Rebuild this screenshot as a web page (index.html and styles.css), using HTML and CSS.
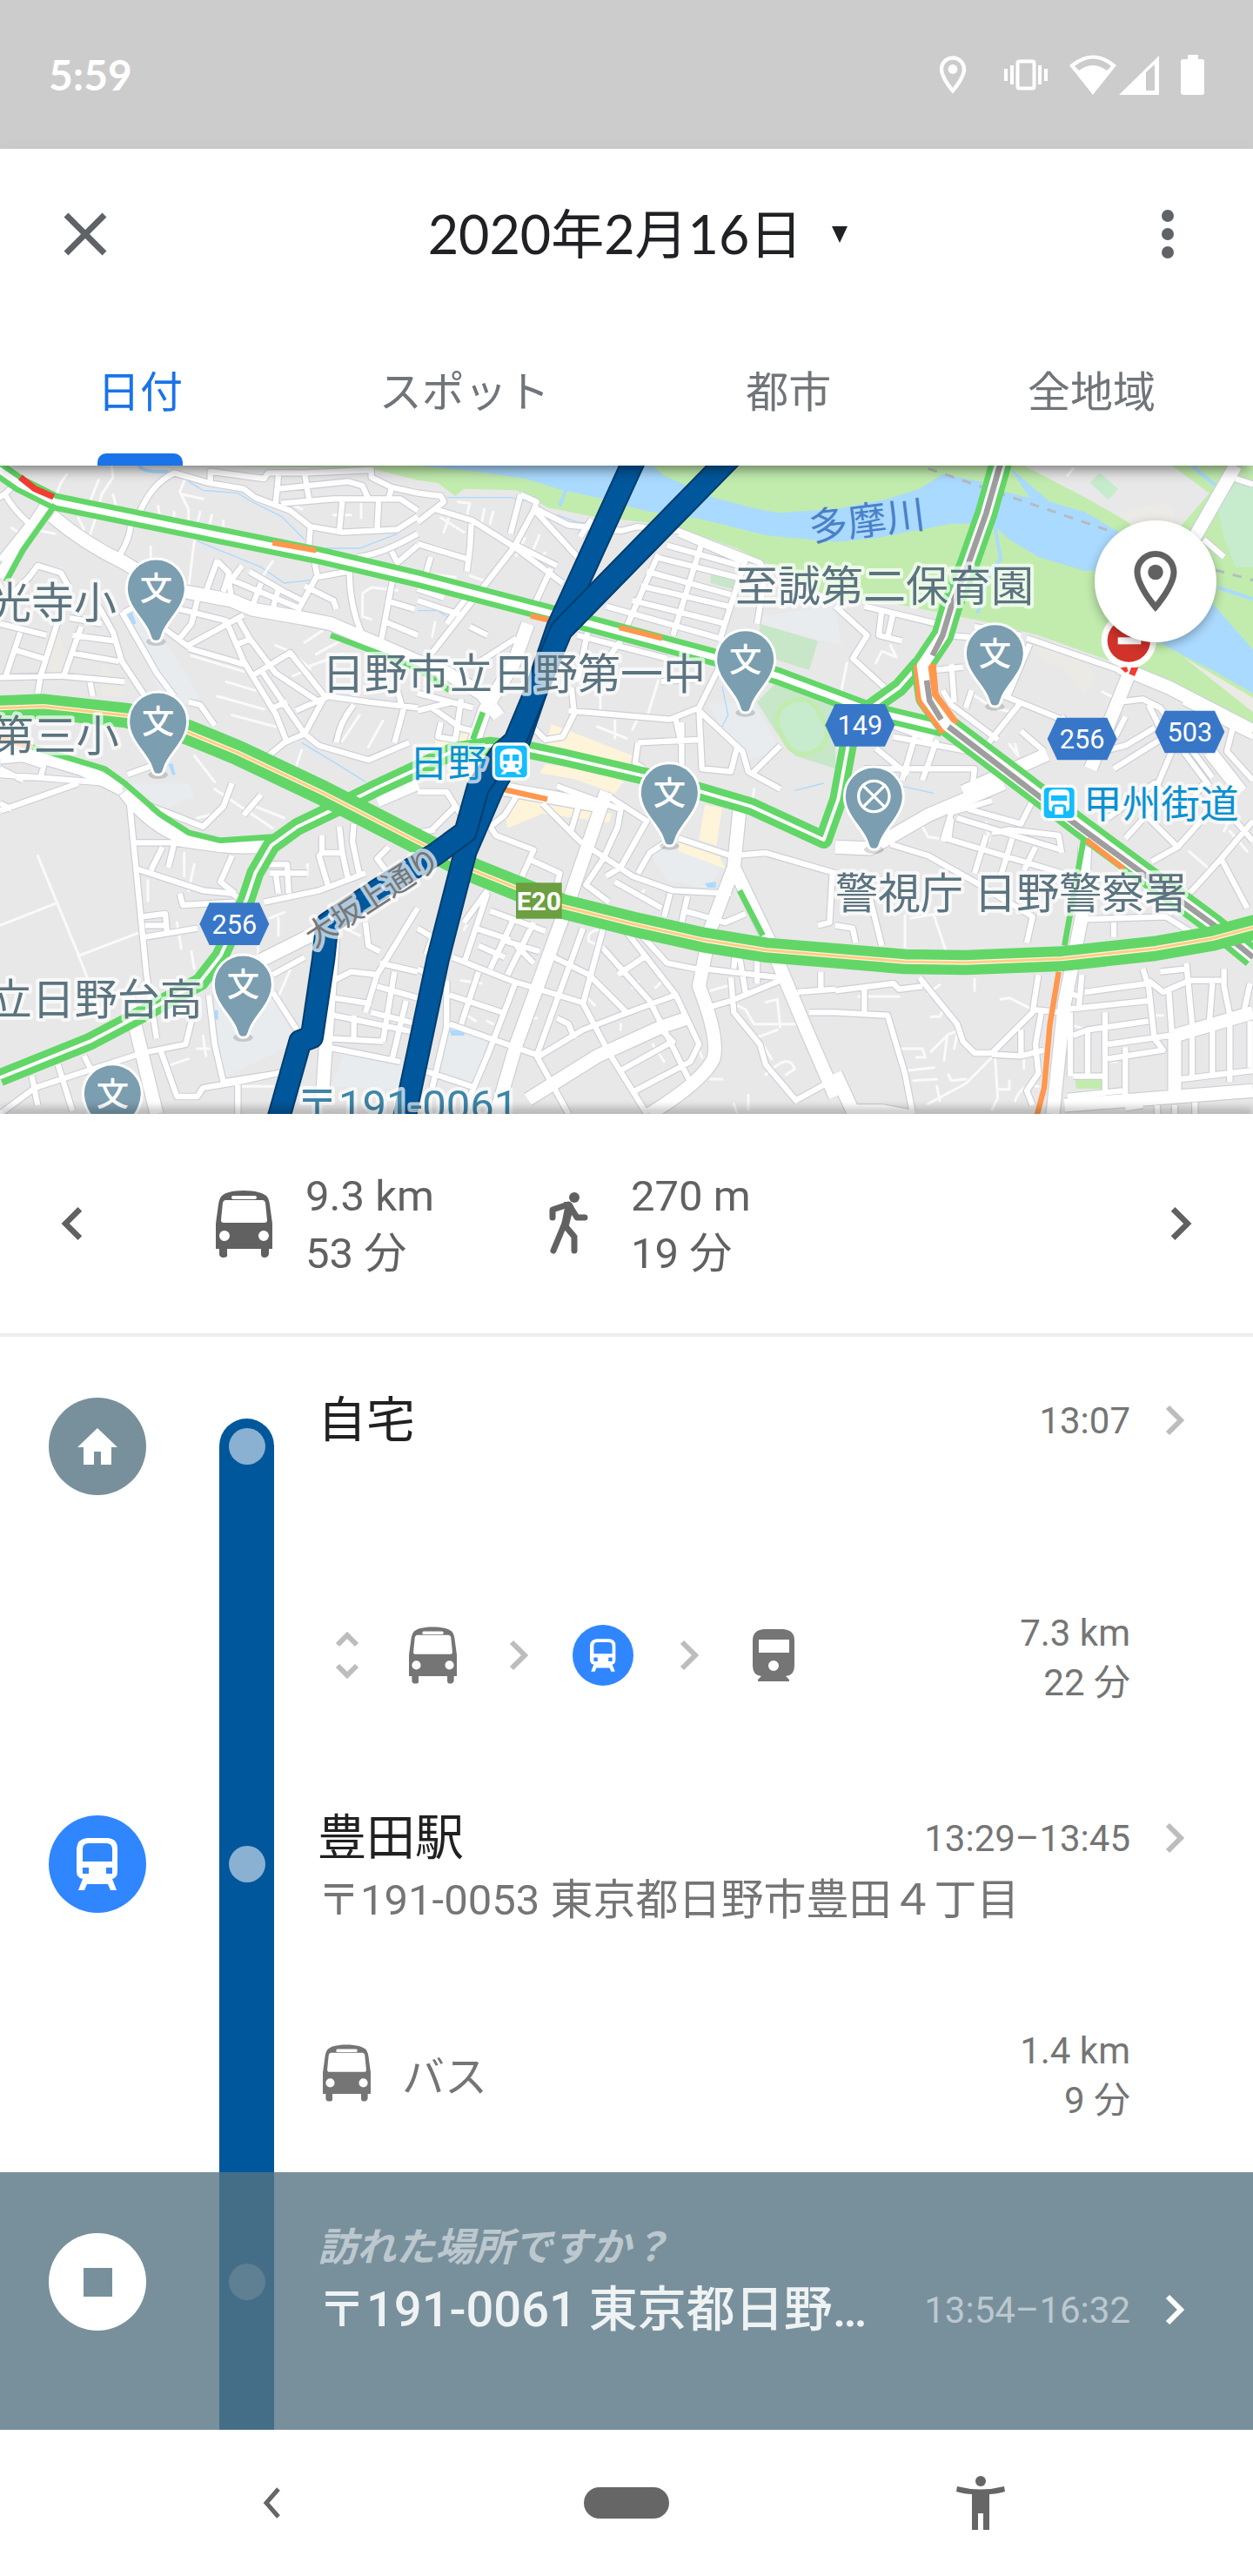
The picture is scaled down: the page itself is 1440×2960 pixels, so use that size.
FILE: index.html
```html
<!DOCTYPE html>
<html lang="ja">
<head>
	<meta charset="utf-8">
	<meta name="viewport" content="width=device-width, initial-scale=1">
	<title>タイムライン</title>
	<link rel="stylesheet" href="styles.css">
</head>
<body>
	<!-- shared icons -->
	<svg class="defs" width="0" height="0" aria-hidden="true">
		<symbol id="bus" viewBox="0 0 65 77">
			<path fill-rule="evenodd" d="M32 0C18 0 10 3 7 6Q4 9 3 16L0 38V67H4V73Q4 77 9 77T13 73V67H52V73Q52 77 56 77T61 73V67H65V38L62 16Q61 9 58 6C54 3 46 0 32 0ZM20 6H45Q47 6 47 8T45 10H20Q18 10 18 8T20 6ZM11 11H54Q56 11 57 14L59 34Q59 37 56 37H9Q6 37 6 34L8 14Q9 11 11 11ZM10 46A6 6 0 1 1 10 58A6 6 0 1 1 10 46ZM55 46A6 6 0 1 1 55 58A6 6 0 1 1 55 46Z"/>
		</symbol>
		<symbol id="train" viewBox="0 0 48 60">
			<path fill-rule="evenodd" d="M12 0H36Q47 1 47 12V38Q47 46 41 47L46 60H39L36 53H12L9 60H2L7 47Q0 46 0 38V12Q1 1 12 0ZM14 6Q7 6 7 13V27H41V13Q41 6 34 6ZM7 34V41H14V34ZM34 34V41H41V34Z"/>
		</symbol>
		<symbol id="metro" viewBox="0 0 48 60">
			<path fill-rule="evenodd" d="M13 0H35Q48 1 48 13V42Q48 53 38 54L42 58V60H6V58L10 54Q0 53 0 42V13Q0 1 13 0ZM7 12V27H42V12ZM24 36A6 6 0 1 0 24 48A6 6 0 1 0 24 36Z"/>
		</symbol>
		<symbol id="pin" viewBox="0 0 24 24">
			<path d="M12 2C8.13 2 5 5.13 5 9c0 5.25 7 13 7 13s7-7.75 7-13c0-3.87-3.13-7-7-7zM7 9c0-2.76 2.24-5 5-5s5 2.24 5 5c0 2.88-2.88 7.19-5 9.88C9.92 16.21 7 11.85 7 9z"/>
			<circle cx="12" cy="9" r="2.5"/>
		</symbol>
		<symbol id="chevron" viewBox="0 0 22 36">
			<path d="M3 3L18 18L3 33" fill="none" stroke="currentColor" stroke-width="6"/>
		</symbol>
	</svg>

	<header class="status">
		<span class="clock">5:59</span>
		<div class="status-icons">
			<svg class="st-pin" width="52" height="52"><use href="#pin"/></svg>
			<svg class="st-vibrate" width="50" height="46" viewBox="0 0 50 46">
				<rect x="15.500" y="7.500" width="19" height="31" rx="2" fill="none" stroke="#fff" stroke-width="4"/>
				<path d="M7 12h4v22H7zM0 16h4v14H0zM39 12h4v22h-4zM46 16h4v14h-4z"/>
			</svg>
			<svg class="st-wifi" width="54" height="46" viewBox="0 0 54 46">
				<path fill-rule="evenodd" d="M27 46L0 12Q27 -11 54 12ZM6 13L11 18Q27 6 43 18L48 13Q27 -4 6 13Z"/>
			</svg>
			<svg class="st-signal" width="46" height="46" viewBox="0 0 46 46">
				<path fill-rule="evenodd" d="M0 46L46 1V46ZM31 20V41H41V11Z"/>
			</svg>
			<svg width="27" height="46" viewBox="0 0 27 46">
				<path d="M8 0H20V5H24Q27 5 27 8V43Q27 46 24 46H3Q0 46 0 43V8Q0 5 3 5H8Z"/>
			</svg>
		</div>
	</header>

	<div class="top">
		<div class="toolbar">
			<button class="icon-btn" aria-label="閉じる">
				<svg width="50" height="50" viewBox="0 0 50 50"><path d="M3 3L47 47M47 3L3 47" stroke="#5f6368" stroke-width="7"/></svg>
			</button>
			<button class="date">
				<span>2020年2月16日</span>
				<svg width="18" height="19" viewBox="0 0 18 19"><path d="M0 0H18L9 19Z" fill="#202124"/></svg>
			</button>
			<button class="icon-btn more" aria-label="メニュー">
				<svg width="14" height="56" viewBox="0 0 14 56"><g fill="#5f6368"><circle cx="7" cy="7" r="7"/><circle cx="7" cy="28" r="7"/><circle cx="7" cy="49" r="7"/></g></svg>
			</button>
		</div>
		<nav class="tabs">
			<button class="tab active">日付</button>
			<button class="tab">スポット</button>
			<button class="tab">都市</button>
			<button class="tab">全地域</button>
		</nav>
	</div>

	<div class="map">
		<svg class="map-canvas" viewBox="0 0 4320 2235" preserveAspectRatio="xMidYMid slice" role="img" aria-label="地図">
			<defs>
				<!-- streets, one group per map tile -->
				<g id="streets">
					<path transform="translate(0 -15)" d="M-10 130L20 110 40 90M15 110Q40 160 100 215L0 340M480 180Q520 80 600 40L720 75 840 95 880 125 1000 170 1070 225 1180 245 1370 235 1440 190M725 75V35L910 60 925 40 1060 40 1280 30V55L1350 90 1440 110M960 50L950 150M1050 40L1065 130M960 95L1200 70 1250 85 1270 130M1350 90L1340 130M970 145L1150 130 1380 130 1440 170M1180 140L1170 240M1305 140L1300 240M1070 230L1065 290M450 220Q450 260 415 320M1235 330Q1320 320 1440 250M1350 310L1370 350 1440 290M750 340L710 450M750 345L790 385 770 450M835 360L790 420 800 480M800 410L1040 510M860 380L980 450 1040 480M900 420L870 500M1090 400L1030 510M960 440L940 510M1090 400L1200 380M1085 350L1095 400M1050 430L1150 480 1160 510M1205 380Q1205 500 1250 600M1355 400L1310 640M1330 480L1430 510M1320 550L1440 600M620 510L780 550 840 690 950 870 990 970M680 480L660 560 620 610M570 580L650 640M640 640L840 530M650 645L840 700M820 540L860 610 950 730 1100 830 1130 810 1270 830 1440 850M870 740L1000 660 1120 810 1050 940 980 970 920 1020M870 610L820 630M900 720L1050 940 1100 980 1270 1030 1410 970M1020 860L1110 820M940 850L990 830M1160 970Q1170 900 1220 840M1370 790L1390 860 1360 970M0 500L100 400 130 360 210 385 235 430M0 560L160 600M200 550L140 740 130 800M280 570L220 740M240 540L350 560M250 600L400 620M340 500L390 590 420 690 500 810M240 660L410 690M70 590L20 740M0 745L210 740 430 760M50 650L150 680M310 760L320 810M420 520L540 730 600 810M430 520L470 500M650 830L690 840 740 910M70 1090L140 1090 150 1050 60 1020M0 1080L380 1110 420 1140M440 1080L550 1040M0 1060L80 1100"/>
					<path transform="translate(1440 -15)" d="M0 110L80 120 90 140 0 210M60 165L190 205 340 300 500 420M185 215L180 300 170 380M355 115L410 140 400 170 330 300 190 480 50 660M355 115L320 250M0 285L180 340M45 330L25 400M400 165L560 340M400 160L520 220 700 240 760 225M340 290L480 360M460 370L400 500M600 200L560 260M750 225L900 240 1180 350 1200 380 1170 560M830 320L690 640M980 280L880 600M1130 340L1040 620M900 250L1130 350M860 290L1110 360M820 330L1100 400M790 380L1080 460M770 430L1070 500M740 480L1060 560M650 500L1040 610M0 480L150 530M0 440L90 470M100 560L200 430M180 570L240 600M200 700L340 610M0 800L190 850M0 860L120 830M50 850L150 920 190 930M80 900L70 950 130 960 150 820M530 780L540 870 500 950 440 960 390 910M520 860L870 890 970 850 1040 710M890 890L910 980M910 900V1060M760 970L970 960M760 970L750 1040 780 1060M970 850L980 1060 1080 1070 1100 990M970 860L1120 1000 1140 1070 1250 1130M1150 1080L1250 980M840 760L960 750M590 570L550 760M700 620L640 700M550 600L860 680"/>
					<path transform="translate(2880 -15)" d="M0 500L110 600 60 680 170 780M160 510L150 600 230 620M100 500L350 560M200 520L180 610M380 600L640 620M400 700L410 830M340 720L440 710M480 570L640 600M660 610L980 720M670 630L590 820M400 840L560 960M400 840L370 790M560 800L780 890M470 790L450 850M640 830L520 980M640 930L720 1000M780 880L840 960M980 830L1060 820 1120 850 1300 1090M920 1000L1000 980 1100 920M960 1060L1120 960M1080 840L1160 1000 1100 1140M1200 1000L1290 1120M1000 880L960 960M1200 830L1440 950M1370 920L1350 1000 1440 1100M200 950L460 1000M280 930L230 1100M140 990L250 1080M350 960L300 1100M100 1060L480 1060 470 1140M1380 60L1440 80M1270 270L1340 330"/>
					<path transform="translate(0 1095)" d="M0 95L270 0M0 70L40 90M445 50L505 660 540 880M460 205L600 205 700 220M560 220L520 300M600 210L580 290M470 295L700 370 800 380 830 400M800 250L760 340 810 380M500 530L680 500M490 460L570 450 575 510M500 490H570M620 380L630 420 810 410M910 410L1100 370 1260 310M920 280L990 280 995 380M930 310H1060M950 310L960 380M1110 180L1110 240 1100 250 1130 350M1110 240L1180 240 1200 330M1170 150L1180 240M1220 140L1215 200 1240 320M1340 220L1300 260 1330 300M940 660L1050 600M1150 680L1210 650 1300 660 1440 430M1260 480L1270 560 1310 580M1150 740L1280 760M1310 620L1440 650M1300 700L1440 740M1280 790L1440 830M1150 800L1440 860M1140 880L1320 890M1220 800V890M1360 650L1320 890M1400 750L1350 960M1130 910L1380 960M1300 660L1260 790M0 1140L120 1050 490 930 640 900 660 820M200 970L250 1130M290 940L310 980M110 1010L130 1110M720 730L740 900 770 1030 960 1000M550 910L610 1080 680 1080 700 1050 820 1030 1000 990M820 1040V1140M940 720L1030 860M440 50L600 110 700 150 770 80 800 0M840 110L900 40"/>
					<path transform="translate(1440 1095)" d="M0 30L100 30 150 110M50 160L130 80M0 170L60 160M0 500L50 530 30 590M0 640L40 660M250 150L300 110 350 30M250 150L270 180 400 230 360 320M380 260L490 310 480 350M430 70L560 200 740 320 880 370 1080 380M560 60L530 160M480 10L700 90 690 150 640 260 580 350 660 410M650 40L790 130 700 290M900 190L1080 250 1200 240 1440 310M760 310L800 240 860 200M650 320L700 290M680 340L840 430M870 380L850 460M930 390L910 480M920 440L1060 480 1130 450M1430 310L1420 480 1380 490M160 480L240 370M240 380L160 620M250 440L440 510M330 470L250 640M200 500L320 540M210 560L300 600M400 480L310 660M290 540L420 580M340 560L400 620M120 600L320 680 580 760M340 680L240 940 180 1080M210 650L150 830M110 730L290 790M100 680V840L50 1050M110 830L420 940 570 850 700 800 890 730M20 990L200 1050M570 500L410 940 520 1140M470 600L590 660 720 790M640 500L570 760 660 930 790 1140M640 570L800 750 940 1030M710 500L890 730 970 900 940 960 750 1060M740 490L860 620 960 640M780 600L690 660M480 810L520 830 540 880M840 850L880 890 700 990M1100 520L1090 640M990 640L1250 670M1010 770L1080 750 1250 680M1080 670L1090 790 1180 900 1200 970 1310 1100M1170 600V690M1110 600L1130 720M1310 720L1440 710M1390 650V710M1350 790H1440M1310 1090L1400 1040"/>
					<path transform="translate(2880 1095)" d="M0 490L60 500 70 550M120 400L160 560M190 210L320 250 480 340 680 460 660 550M380 190L780 310M400 120L390 200M420 120L780 230M520 180L480 310M610 190L570 320M690 220L650 300M540 170L600 160 770 180 780 240M460 90L640 140 700 20M370 200L400 100 540 60M830 470L1140 460 1220 510M960 480V530M1150 450L1230 370 1330 260 1440 130M1060 100L1180 220 1090 270M1180 220L1260 130M1330 260L1420 430M940 120L1100 0 1200 100 1270 0M1000 190L1100 80M1270 0L1440 200M0 715L200 690 220 710 300 700M100 710V790M0 790L180 800 240 1000 265 1130M290 670L420 830 440 890 480 930 540 930 680 790 700 660M540 935L640 940 720 920M640 850V940M710 790L690 900 700 1000 660 1060 680 1110M680 780L780 790M850 660L840 770M860 720L1080 690M790 780L1080 750M800 720L850 740M1060 640L1080 700 1100 880 1130 920 940 950M810 790V1010M820 870L870 850 1080 820M870 850V1010M930 790V1060M820 1010H930M940 900L1150 870M1000 910V1090M800 1080L990 1060M1080 680L1130 720 1220 680 1330 680M1150 720L1160 860M1210 620L1230 830M1120 650L1210 640M1300 690L1290 820M1340 640V700L1360 800M1430 690L1410 780M1230 860V1010M1300 850V1000M1360 830V1030M1430 820V980M1190 1020L1440 990M1110 1140V1110M1170 1140V1110M1240 1140V1100M1000 1120L1060 1110"/>
				</g>
				<g id="avenues">
					<path transform="translate(0 -15)" d="M180 190Q300 290 430 350L540 420M640 450L800 480 870 510 1040 540 1140 560 1280 620 1440 690M160 155L0 400M0 1020L110 1010 280 1060 420 1130"/>
					<path transform="translate(1440 -15)" d="M0 690L100 730 220 800 280 880M380 560L330 700 230 860 190 980"/>
					<path transform="translate(2880 -15)" d="M1010 740L880 1060M980 710L1150 780 1440 930M1380 15L1240 260M440 1140L730 1010M0 880L120 870 340 950M1290 1000L1400 1140"/>
					<path transform="translate(0 1095)" d="M900 610L1060 530 1440 290M440 730L540 1140M1150 500L1110 1100M430 30Q520 150 640 190T940 215M1440 0L1300 60"/>
					<path transform="translate(1440 1095)" d="M650 30L530 380 340 900 270 1140M1110 90L1090 290 1010 500 970 700Q1040 880 1020 950Q980 1030 800 1140M1090 290L1210 540 1340 850 1440 1080M380 1090L620 940 840 840 930 810M300 20L640 80"/>
					<path transform="translate(2880 1095)" d="M0 220L120 225 320 110 580 0M860 220L850 460 790 760 750 1140M1170 860V1090M1170 870L1440 790M790 1110L1440 1060M0 1000L60 1130 160 1130 270 1150"/>
				</g>
				<g id="school">
					<ellipse cx="0" cy="184" rx="34" ry="14" fill="#000" opacity=".15"/>
					<path d="M0 184C18 184 18 172 24 156C40 110 102 66 102 0A102 102 0 1 0 -102 0C-102 66 -40 110 -24 156C-18 172 -18 184 0 184Z" fill="#7b9eb0" stroke="#fff" stroke-width="9"/>
				</g>
				<path id="shield" d="M-120 0L-86 -73H86L120 0L86 73H-86Z" fill="#3877c8"/>
			</defs>

			<rect width="4320" height="2235" fill="#e8e8e8"/>

			<!-- parks, river, land use -->
			<path d="M750 0H3530L3750 115 3890 195 4070 210 4170 95 4040 0H4320V910L4080 765 3860 685 3580 585 3380 535 3080 475 2880 465 2660 345 2540 285 2340 215 2220 195 2040 175 1890 145 1780 85 1600 80 1570 105 1510 60 1440 50 1280 10Z" fill="#c1ecae"/>
			<path d="M1440 0H2250L2290 35 2360 65 2440 105 2590 145 2680 163 2880 150 3060 115 3170 80 3250 30 3380 55 3440 85 3550 110 3530 80 3480 5 3620 125 3740 160 3860 230 4180 475 4320 635V785L4180 705 4080 655 3990 605 3800 360 3740 363 3580 315 3480 255 3420 200 3280 200 3020 250 2880 263 2640 240 2420 185 2220 155 2080 115 1940 85 1810 45 1640 20Z" fill="#aadaff"/>
			<path d="M3430 210L3450 320 3400 390 3370 510M1950 85L1930 140M4110 0L4180 60 4320 120M4200 420L4320 460" fill="none" stroke="#aadaff" stroke-width="12"/>
			<path d="M4220 250L4190 110 4280 50 4320 60V350H4260ZM3790 25L3855 80 3822 118 3758 60Z" fill="#c7ebcd"/>
			<path d="M3860 170Q3960 120 4040 140L4050 200 3900 205ZM3560 620L3700 650 3780 720 3740 790 3660 690 3600 680ZM4080 660L4320 800V850Z" fill="#eceae5"/>
			<path d="M2620 545L2820 605 2790 705 2620 650ZM2610 815L2680 745 2880 815V1045L2740 1000 2680 925Z" fill="#c8e6c8"/>
			<rect x="2690" y="805" width="150" height="190" rx="70" fill="#c7ebcd" stroke="#c1ecae" stroke-width="16" transform="rotate(-28 2765 900)"/>
			<path d="M2620 520L2880 480 2900 620 2620 545ZM2440 820L2600 820 2690 980 2560 1020ZM2240 1340L2330 1290 2490 1370 2450 1460 2300 1430ZM1550 1940L1680 1980 1640 2130 1520 2090ZM430 510L510 510 690 800 640 820 560 800ZM450 1095H650L670 1140 560 1190ZM740 1850L940 1820 1020 1990 770 2110ZM1190 2020L1400 2060 1380 2150 1140 2140Z" fill="#e8ecef"/>
			<path d="M1900 890L2180 1000 2160 1060 1880 980ZM1740 1190L1810 1120 1910 1160 2110 1200 2100 1230 1870 1200 1750 1250ZM1500 945L1620 920 1650 960 1500 990ZM1860 1060L1980 1080 2120 1130 2150 1090 2060 1050 1880 1030ZM2340 1290L2480 1345 2500 1390 2340 1330ZM2430 1170L2490 1180 2470 1310 2410 1290Z" fill="#fef4da"/>
			<path d="M130 640L200 560 240 700 180 720ZM350 680L430 760 420 800 350 790ZM40 380L110 420 0 520Z" fill="#eceae5"/>
			<path d="M2450 375L2535 395 2525 425 2450 405Z" fill="#c8e6c8"/>
			<path d="M3708 2113H3800V2148H3710ZM3735 2180L3855 2172 3858 2190 3736 2205Z" fill="#c1ecae"/>
			<path d="M650 55L700 85 820 95 860 120 970 175 1050 255M680 260L900 350 980 405 1070 395M1120 285L1240 285 1370 235M1540 110L1760 110 1860 130M1920 170L1990 195 2050 200M1440 500L1510 500 1570 540M2490 760L2510 860 2490 900M1040 955L1180 1040 1260 1090M2740 1120L2840 1095M3110 1105L3220 1130" fill="none" stroke="#aadaff" stroke-width="4"/>
			<path d="M440 510L455 505 470 545 455 548ZM580 1030L595 1025 605 1065 595 1068ZM738 1878H752V1910H740ZM1550 1945L1600 1950V1965H1555ZM2430 1440L2468 1435V1455H2440Z" fill="#aadaff"/>
			<path d="M480 0Q490 25 580 20" fill="none" stroke="#aadaff" stroke-width="12"/>
			<path d="M3200 10L3840 230M4190 360L4320 395" fill="none" stroke="#b4bcc0" stroke-width="9" stroke-dasharray="32 30"/>

			<!-- roads -->
			<g class="lanes">
				<path d="M385 0L390 40 350 100 340 150 310 240M230 30L210 60 190 110M340 50L300 150M390 100L400 140M545 140L550 170M600 160V190M640 40L620 90 650 150V190M630 100L700 115M690 160L680 200M730 170L720 220M770 190V220M670 260L650 420M520 280V320M40 215L80 240M140 225L190 235M270 180L290 220 270 250M940 330L900 390M1250 440L1280 420 1370 430M1250 440V520L1280 530M1150 170H1210M1245 130V180M1000 130L1040 150M660 655L840 710M780 745L880 775M750 795L910 840M800 860L950 900M1090 650L1200 590M1050 610L1110 570M950 620L1000 640 1070 700 1010 725M1070 690L1180 650M1240 860L1180 950M1320 880L1270 970M670 1000L740 1090M1040 980L1020 1040"/>
				<path d="M1520 180L1600 230M1550 170L1530 230M1580 125L1620 130 1610 170M1670 150L1660 200M1700 160L1690 200M1810 250L1780 310M1860 240L1830 310M1880 300L1840 340M1450 370L1570 385M1500 540L1490 590M1620 380L1680 400M2070 780V860M2120 880V940M2060 900L2160 940M2270 740L2230 870M2200 870L2180 910"/>
				<path d="M3070 620L3090 660 3040 640 3020 680M2920 680L2900 780M3480 960L3510 1000 3500 960M3340 780L3400 820M3440 840L3500 850M3800 780L3840 800M3700 10L3680 35"/>
				<path d="M130 1345L270 1685 350 1895M0 1585L190 1510M270 1690L480 1610M635 1335V1415M670 1375L650 1465M510 1430V1500M610 1575L625 1665M660 1675L670 1735M890 1655V1695M1060 1375V1415M740 1115L940 1250M680 1215L760 1195M860 1200L900 1140M880 1175L980 1215M700 1965L710 2035M590 2065L650 2045M680 2010H720M930 1560L980 1540M960 1560V1620M1180 1590L1240 1620M830 2140H940M1000 1740L960 1830"/>
				<path d="M1590 1775L1660 1785M1610 1895L1640 1915M1680 1915L1700 1925M1620 1560L1600 1600M1830 1905H1850M2020 1830L2050 1860M2600 1115L2590 1185M2220 1465L2200 1485M2140 1925V1945M2250 1995L2290 2055M2530 1855L2570 1875 2600 1925 2750 1925M2640 1850L2680 1840 2690 1935M2630 1995L2660 2045M2450 2115H2490M2600 1975L2680 1945M2080 1600Q2020 1600 2030 1640L2080 1660M2200 1780L2180 1800M2280 1780L2260 1800M2400 1990L2420 2040M2640 2100Q2720 2020 2740 2080L2710 2100M2450 1810L2520 1790M2530 2200L2540 2230M2580 2170V2220"/>
				<path d="M3120 1550V1660M3220 1550L3260 1670M3140 1560L3260 1540M3360 1770V1810M2960 1830H3100M3200 1820L3240 1790M3450 1840L3480 1835 3550 1870M3210 1900L3240 1900 3250 1880M3110 2010L3180 2010 3190 2040 3160 2040M3130 2085L3220 2075M3150 2120L3230 2115M3210 2020L3270 1960 3300 1950M3265 1970L3255 2050M3300 1960L3290 2010M3430 2030L3440 2180 3420 2220M3420 2040L3330 2130 3200 2200M3270 2100L3280 2120 3330 2115M3230 2140L3240 2190M3440 2150H3480V2120M3530 2030V2080M3400 1230L3410 1290M4100 1330L4180 1400M4240 1260L4300 1330M4220 1260L4260 1180M3700 1930L3730 1940V1960M3820 2055H3850M3970 1895H4010M3500 2190Q3520 2130 3580 2140M3160 1210L3200 1280 3280 1290"/>
			</g>
			<use href="#streets" class="street-edge"/>
			<use href="#avenues" class="avenue-edge"/>
			<use href="#streets" class="street"/>
			<use href="#avenues" class="avenue"/>

			<!-- traffic -->
			<g class="traffic">
				<path class="pair" d="M-10 10L70 65 190 125 680 225 1100 310 1440 390 1920 515 2460 660 2680 725 2880 800 3000 845 3250 905"/>
				<path class="gap" d="M-10 10L70 65 190 125 680 225 1100 310 1440 390 1920 515 2460 660 2680 725 2880 800 3000 845 3250 905"/>
				<path class="pair" d="M0 2110L310 1985 500 1885 690 1780 760 1690 850 1495 880 1405 935 1310 1025 1245 1160 1180 1300 1110 1440 1045 1560 985 1690 965 1830 982 1940 1005 2220 1070 2420 1125 2590 1175 2840 1290 2890 1150 2925 960 2980 850 3100 765 3170 685"/>
				<path class="gap thin" d="M0 2110L310 1985 500 1885 690 1780 760 1690 850 1495 880 1405 935 1310 1025 1245 1160 1180 1300 1110 1440 1045 1560 985 1690 965 1830 982 1940 1005 2220 1070 2420 1125 2590 1175 2840 1290 2890 1150 2925 960 2980 850 3100 765 3170 685"/>
				<path class="pair wide" d="M3450 -10L3400 165 3340 335 3280 485 3250 585 3180 690 3195 800 3265 895 3530 1095 3720 1240 4180 1580 4320 1695"/>
				<path class="slow-pair" d="M3188 685L3198 800 3275 905"/>
				<path class="gap wide" d="M3450 -10L3400 165 3340 335 3280 485 3250 585 3180 690 3195 800 3265 895 3530 1095 3720 1240 4180 1580 4320 1695"/>
				<path class="core" d="M3450 -10L3400 165 3340 335 3280 485 3250 585 3215 655M3195 740L3205 810 3245 875M3270 900L3530 1100 3720 1245 4180 1580 4320 1695"/>
				<path class="single" d="M190 135L80 290 20 400M110 970L360 1045 430 1095 550 1200 650 1265 760 1292 940 1280M1140 585L1300 645 1440 700 1550 775M1665 850L1630 945M2550 1465L2630 1620M3735 1295L3670 1655"/>
				<path class="slow" d="M940 266L1090 292M1830 518L1905 535M2135 558L2283 595M1740 1117L1887 1150M3745 1290L3875 1390M3650 1745L3620 1925 3600 2145 3575 2240M0 940L110 970"/>
				<path class="jam" d="M70 40L120 80 185 108"/>
				<path class="expressway" d="M-10 836L150 830 440 862 650 920 820 990 1110 1127 1440 1297 1630 1395 1940 1520 2180 1580 2425 1635 2640 1670 2880 1690 3120 1710 3330 1713 3660 1700 3980 1665 4180 1630 4330 1590"/>
				<path class="median" d="M-10 836L150 830 440 862 650 920 820 990 1110 1127 1440 1297 1630 1395 1940 1520 2180 1580 2425 1635 2640 1670 2880 1690 3120 1710 3330 1713 3660 1700 3980 1665 4180 1630 4330 1590"/>
				<path class="median-line" d="M-10 836L150 830 440 862 650 920 820 990 1110 1127 1440 1297 1630 1395 1940 1520 2180 1580 2425 1635 2640 1670 2880 1690 3120 1710 3330 1713 3660 1700 3980 1665 4180 1630 4330 1590"/>
			</g>

			<!-- travelled route -->
			<g class="route">
				<path class="route-edge" d="M2223 -100L1922 560 1785 960 1700 1110 1605 1330 1510 1700 1375 2340"/>
				<path class="route-line" d="M2223 -100L1922 560 1785 960 1700 1110 1605 1330 1510 1700 1375 2340"/>
				<path class="route-edge" d="M2588 -100L1935 568 1775 950 1730 990 1648 1110 1605 1263 1500 1340 1300 1465 1128 1580 1115 1700 1075 1970 1035 1985 935 2340"/>
				<path class="route-line" d="M2588 -100L1935 568 1775 950 1730 990 1648 1110 1605 1263 1500 1340 1300 1465 1128 1580 1115 1700 1075 1970 1035 1985 935 2340"/>
			</g>

			<!-- markers -->
			<g class="pins">
				<use href="#school" x="538" y="423"/><text x="538" y="466">文</text>
				<use href="#school" x="545" y="882"/><text x="545" y="925">文</text>
				<use href="#school" x="2570" y="668"/><text x="2570" y="711">文</text>
				<use href="#school" x="3430" y="647"/><text x="3430" y="690">文</text>
				<use href="#school" x="2308" y="1127"/><text x="2308" y="1170">文</text>
				<use href="#school" x="838" y="1788"/><text x="838" y="1831">文</text>
				<use href="#school" x="388" y="2165"/><text x="388" y="2208">文</text>
				<use href="#school" x="3013" y="1140"/>
				<g fill="none" stroke="#fff" stroke-width="10"><circle cx="3013" cy="1140" r="53"/><path d="M2978 1105L3048 1175M3048 1105L2978 1175"/></g>
			</g>
			<g class="shields">
				<use href="#shield" x="2965" y="895"/><text x="2965" y="928">149</text>
				<use href="#shield" x="3731" y="942"/><text x="3731" y="975">256</text>
				<use href="#shield" x="4102" y="918"/><text x="4102" y="951">503</text>
				<use href="#shield" x="808" y="1580"/><text x="808" y="1613">256</text>
				<rect x="1779" y="1438" width="158" height="124" fill="#6b9f3f"/>
				<text class="exp" x="1858" y="1533">E20</text>
			</g>
			<g>
				<circle cx="3892" cy="603" r="95" fill="#fff"/>
				<circle cx="3892" cy="603" r="74" fill="#d1332b"/>
				<rect x="3854" y="592" width="80" height="24" fill="#fff"/>
				<path d="M3862 697L3885 694 3890 708 3880 714ZM3900 696H3925L3912 726 3892 718Z" fill="#f23c32"/>
			</g>

			<!-- place names -->
			<g class="labels">
				<text x="402" y="526" text-anchor="end">光寺小</text>
				<text x="410" y="984" text-anchor="end">第三小</text>
				<text x="1110" y="772">日野市立日野第一中</text>
				<text x="2535" y="469">至誠第二保育園</text>
				<text x="2880" y="1527">警視庁 日野警察署</text>
				<text x="698" y="1894" text-anchor="end">立日野台高</text>
				<text class="postal" x="1020" y="2257">〒191-0061</text>
				<text class="stop" x="1411" y="1075">日野</text>
				<text class="stop" x="3735" y="1216">甲州街道</text>
				<text class="river" transform="translate(2795 262) rotate(-7)">多摩川</text>
				<text class="street-name" transform="translate(1108 1605) rotate(-33)" x="-53" y="36">大坂上通り</text>
			</g>
			<g>
				<rect x="1702" y="960" width="120" height="120" rx="18" fill="#13bdff" stroke="#fff" stroke-width="10"/>
				<path fill="#fff" fill-rule="evenodd" d="M1750 976H1774Q1800 980 1800 1000V1034Q1798 1048 1786 1050L1798 1064H1784L1776 1056H1748L1740 1064H1726L1738 1050Q1726 1048 1724 1034V1000Q1724 980 1750 976ZM1735 996V1018H1757V996ZM1767 996V1018H1789V996ZM1742 1028A7 7 0 1 0 1742 1042A7 7 0 1 0 1742 1028ZM1782 1028A7 7 0 1 0 1782 1042A7 7 0 1 0 1782 1028Z"/>
				<rect x="3594" y="1105" width="115" height="115" rx="18" fill="#13bdff" stroke="#fff" stroke-width="10"/>
				<path fill="#fff" fill-rule="evenodd" d="M3632 1117H3671Q3687 1118 3687 1134V1180Q3687 1192 3676 1192V1182Q3676 1168 3662 1168H3641Q3627 1168 3627 1182V1192Q3616 1192 3616 1180V1134Q3616 1118 3632 1117ZM3624 1137V1156H3679V1137ZM3637 1176H3666V1203H3637Z"/>
			</g>
		</svg>
		<button class="fab" aria-label="スポット"><svg width="84" height="84"><use href="#pin"/></svg></button>
	</div>

	<section class="summary">
		<button class="step" aria-label="前へ"><svg class="flip" width="26" height="40"><use href="#chevron"/></svg></button>
		<div class="modes">
			<div class="mode">
				<svg width="65" height="77"><use href="#bus"/></svg>
				<p>9.3 km<br>53 分</p>
			</div>
			<div class="mode">
				<svg class="walk" width="46" height="72" viewBox="0 0 46 72">
					<circle cx="29" cy="6" r="6"/>
					<path d="M4 29V20L22 14M24 16L32 29H41M17 38L5 67M18 38L29 51V67" fill="none" stroke="currentColor" stroke-width="7" stroke-linejoin="round" stroke-linecap="round"/>
					<path d="M17 11H24Q28 13 28 18L22 42H13L18 18Z"/>
				</svg>
				<p>270 m<br>19 分</p>
			</div>
		</div>
		<button class="step" aria-label="次へ"><svg width="26" height="40"><use href="#chevron"/></svg></button>
	</section>

	<ol class="timeline">
		<li class="visit">
			<span class="place"><svg width="46" height="42" viewBox="0 0 46 42"><path d="M23 0L46 22H39V42H27V27H19V42H7V22H0Z"/></svg></span>
			<span class="rail start"><i class="dot"></i></span>
			<a class="info" href="#">
				<span class="line"><span class="name">自宅</span><time>13:07</time><svg class="go" width="22" height="36"><use href="#chevron"/></svg></span>
			</a>
		</li>
		<li class="travel">
			<span class="rail"></span>
			<div class="legs">
				<button class="expand" aria-label="展開"><svg width="28" height="54" viewBox="0 0 28 54"><path d="M3 15L14 4L25 15M3 39L14 50L25 39" fill="none" stroke="#bdbdbd" stroke-width="6"/></svg></button>
				<svg width="55" height="66"><use href="#bus"/></svg>
				<svg class="sep" width="22" height="36"><use href="#chevron"/></svg>
				<span class="line-badge"><svg width="30" height="38"><use href="#train"/></svg></span>
				<svg class="sep" width="22" height="36"><use href="#chevron"/></svg>
				<svg class="metro" width="48" height="60"><use href="#metro"/></svg>
			</div>
			<p class="cost">7.3 km<br>22 分</p>
		</li>
		<li class="visit">
			<span class="place station"><svg width="48" height="60"><use href="#train"/></svg></span>
			<span class="rail"><i class="dot"></i></span>
			<a class="info" href="#">
				<span class="line"><span class="name">豊田駅</span><time>13:29–13:45</time><svg class="go" width="22" height="36"><use href="#chevron"/></svg></span>
				<span class="address">〒191-0053 東京都日野市豊田４丁目</span>
			</a>
		</li>
		<li class="travel">
			<span class="rail"></span>
			<div class="legs">
				<svg width="55" height="66"><use href="#bus"/></svg>
				<span class="leg-name">バス</span>
			</div>
			<p class="cost">1.4 km<br>9 分</p>
		</li>
		<li class="visit confirm">
			<span class="place"><svg width="33" height="33" viewBox="0 0 33 33"><path d="M0 0H33V33H0Z"/></svg></span>
			<span class="rail"><i class="dot"></i></span>
			<a class="info" href="#">
				<span class="question">訪れた場所ですか？</span>
				<span class="line"><span class="name">〒191-0061 東京都日野…</span><time>13:54–16:32</time><svg class="go" width="22" height="36"><use href="#chevron"/></svg></span>
			</a>
		</li>
	</ol>

	<footer class="navbar">
		<button class="back" aria-label="戻る"><svg width="20" height="36" viewBox="0 0 20 36"><path d="M18 2L4 18L18 34" fill="none" stroke="#666" stroke-width="5"/></svg></button>
		<button aria-label="ホーム"><span class="pill"></span></button>
		<button class="access" aria-label="ユーザー補助"><svg width="56" height="62" viewBox="0 0 56 62"><circle cx="28" cy="6" r="6"/><path d="M1 12Q28 19 55 12L56 18Q46 21 38 21V62H31V43H25V62H18V21Q10 21 0 18Z"/></svg></button>
	</footer>
</body>
</html>
```

FILE: styles.css
```css
* {
	box-sizing: border-box;
}
body {
	margin: 0;
	background-color: white;
	font-family: Roboto, "Noto Sans CJK JP", sans-serif;
	font-size: 49px;
	color: #757575;
}
button {
	border: none;
	padding: 0;
	background: none;
	font: inherit;
	color: inherit;
	cursor: pointer;
}
a {
	color: inherit;
	text-decoration: none;
}
p {
	margin: 0;
}
svg {
	display: block;
	flex: none;
	fill: currentColor;
}
.defs {
	position: absolute;
}

/* status bar */
.status {
	display: flex;
	justify-content: space-between;
	align-items: center;
	height: 171px;
	padding: 0 56px;
	background-color: #ccc;
	color: white;
}
.clock {
	font-family: Lato, sans-serif;
	font-size: 48px;
	font-weight: bold;
}
.status-icons {
	display: flex;
	align-items: center;
}
.st-pin {
	margin-right: 33px;
}
.st-vibrate {
	margin-right: 25px;
}
.st-wifi {
	margin-right: 3px;
}
.st-signal {
	margin-right: 25px;
}

/* header */
.top {
	position: relative;
	z-index: 1;
	background-color: white;
	box-shadow: 0 8px 14px -4px rgba(0, 0, 0, 0.5);
}
.toolbar {
	display: flex;
	justify-content: space-between;
	align-items: center;
	height: 196px;
	padding: 0 73px;
}
.icon-btn {
	width: 50px;
	display: flex;
	justify-content: center;
}
.date {
	display: flex;
	align-items: center;
	gap: 34px;
	padding-left: 26px;
	font-family: Lato, "Noto Sans CJK JP", sans-serif;
	font-size: 61px;
	color: #202124;
}
.date span {
	padding-bottom: 8px;
}
.tabs {
	display: flex;
	justify-content: space-between;
	padding: 0 112px;
}
.tab {
	position: relative;
	height: 168px;
	padding-bottom: 10px;
	color: #70757a;
}
.tab.active {
	color: #1a73e8;
}
.tab.active::after {
	content: "";
	position: absolute;
	left: 0;
	bottom: 0;
	width: 100%;
	height: 14px;
	border-radius: 10px 10px 0 0;
	background-color: #1a73e8;
}

/* map */
.map {
	position: relative;
	overflow: hidden;
}
.map-canvas {
	width: 100%;
}
.fab {
	position: absolute;
	top: 63px;
	right: 42px;
	width: 140px;
	height: 140px;
	border-radius: 50%;
	display: flex;
	align-items: center;
	justify-content: center;
	background-color: white;
	color: #616161;
	box-shadow: 0 4px 12px rgba(0, 0, 0, 0.3);
}
.lanes, .street-edge, .street, .avenue-edge, .avenue, .traffic, .route {
	fill: none;
	stroke-linejoin: round;
}
.lanes {
	stroke: #fafafa;
	stroke-width: 9;
	stroke-linecap: round;
}
.street-edge {
	stroke: #cdced6;
	stroke-width: 26;
}
.street {
	stroke: white;
	stroke-width: 19;
}
.avenue-edge {
	stroke: #cdced6;
	stroke-width: 52;
}
.avenue {
	stroke: white;
	stroke-width: 45;
}
.pair {
	stroke: #63d668;
	stroke-width: 60;
}
.pair.wide {
	stroke-width: 78;
}
.gap {
	stroke: white;
	stroke-width: 22;
}
.gap.thin {
	stroke-width: 12;
}
.gap.wide {
	stroke-width: 38;
}
.core {
	stroke: #9e9e9e;
	stroke-width: 20;
}
.single {
	stroke: #63d668;
	stroke-width: 20;
}
.slow {
	stroke: #ff974d;
	stroke-width: 19;
}
.slow-pair {
	stroke: #ff974d;
	stroke-width: 78;
}
.jam {
	stroke: #f23c32;
	stroke-width: 22;
}
.expressway {
	stroke: #63d668;
	stroke-width: 86;
}
.median {
	stroke: #fff2d8;
	stroke-width: 16;
}
.median-line {
	stroke: #ffcc80;
	stroke-width: 8;
}
.route-edge {
	stroke: #013e70;
	stroke-width: 82;
}
.route-line {
	stroke: #01579b;
	stroke-width: 70;
}
.pins text {
	font-size: 112px;
	font-weight: 500;
	fill: white;
	text-anchor: middle;
}
.shields text {
	font-size: 92px;
	fill: white;
	text-anchor: middle;
}
.shields .exp {
	font-size: 90px;
	font-weight: bold;
}
.labels text {
	font-size: 147px;
	fill: #5b7480;
	stroke: rgba(255, 255, 255, 0.7);
	stroke-width: 24;
	stroke-linejoin: round;
	paint-order: stroke;
}
.labels .postal {
	fill: #3d86a8;
}
.labels .stop {
	font-size: 134px;
	fill: #0b91d1;
}
.labels .river {
	font-size: 134px;
	fill: #4a80c8;
	stroke: none;
}
.labels .street-name {
	font-size: 106px;
	fill: #777;
}

/* totals of the day */
.summary {
	position: relative;
	display: flex;
	align-items: center;
	height: 256px;
	padding: 0 70px;
	border-bottom: 4px solid #eee;
	background-color: white;
	color: #616161;
	box-shadow: 0 -8px 8px rgba(0, 0, 0, 0.2);
}
.modes {
	flex: 1;
	display: flex;
	gap: 132px;
	padding-left: 152px;
}
.mode {
	display: flex;
	align-items: center;
	gap: 38px;
	line-height: 66px;
}
.mode p {
	padding-top: 4px;
}
.walk {
	margin-right: 10px;
}
.flip {
	transform: rotate(180deg);
}

/* timeline */
.timeline {
	list-style: none;
	margin: 0;
	padding: 0;
}
.visit, .travel {
	display: grid;
	grid-template-columns: 252px 63px 1fr;
}
.visit {
	height: 252px;
}
.travel {
	height: 228px;
	grid-template-columns: 252px 63px 1fr auto;
}
.place {
	width: 112px;
	height: 112px;
	margin: 70px 0 0 56px;
	border-radius: 50%;
	display: flex;
	align-items: center;
	justify-content: center;
	background-color: #78909c;
	color: white;
}
.place.station, .line-badge {
	background-color: #3086ff;
}
.rail {
	grid-column: 2;
	background-color: #01579b;
	padding-top: 105px;
}
.rail.start {
	margin-top: 94px;
	padding-top: 11px;
	border-radius: 32px 32px 0 0;
}
.dot {
	display: block;
	width: 42px;
	height: 42px;
	margin: 0 auto;
	border-radius: 50%;
	background-color: #8ab1d2;
}
.info {
	min-width: 0;
	padding: 60px 79px 0 50px;
}
.line {
	display: flex;
	align-items: center;
}
.name {
	flex: 1;
	white-space: nowrap;
	font-size: 56px;
	line-height: 72px;
	color: #212121;
}
.address {
	display: block;
	line-height: 72px;
}
time {
	font-size: 42px;
}
.go {
	margin-left: 40px;
	color: #bdbdbd;
}
.legs {
	display: flex;
	align-items: center;
	padding-left: 56px;
}
.expand {
	margin: 0 57px 0 14px;
}
.sep {
	margin: 0 51px 0 60px;
	color: #bdbdbd;
}
.line-badge {
	width: 70px;
	height: 70px;
	border-radius: 50%;
	display: flex;
	align-items: center;
	justify-content: center;
	color: white;
}
.line-badge + .sep {
	margin: 0 62px 0 53px;
}
.leg-name {
	margin-left: 36px;
}
.cost {
	align-self: center;
	padding: 6px 141px 0 0;
	font-size: 42px;
	line-height: 57px;
	text-align: right;
}
.confirm {
	height: 296px;
	background-color: #78909c;
	color: #bcc8ce;
}
.confirm .place {
	background-color: white;
	color: #78909c;
}
.confirm .rail {
	background-color: #446e88;
}
.confirm .dot {
	background-color: #5f7f92;
}
.confirm .info {
	padding-top: 52px;
}
.question {
	display: block;
	font-size: 45px;
	font-weight: bold;
	font-style: italic;
	line-height: 70px;
}
.confirm .name {
	font-weight: 500;
	color: #eff2f3;
}
.confirm .go {
	color: white;
}

/* system navigation */
.navbar {
	display: grid;
	grid-template-columns: 1fr auto 1fr;
	align-items: center;
	height: 168px;
	padding: 0 285px;
	color: #666;
}
.back {
	justify-self: start;
	margin-left: 17px;
}
.access {
	justify-self: end;
}
.pill {
	display: block;
	width: 98px;
	height: 36px;
	border-radius: 18px;
	background-color: #666;
}
```
